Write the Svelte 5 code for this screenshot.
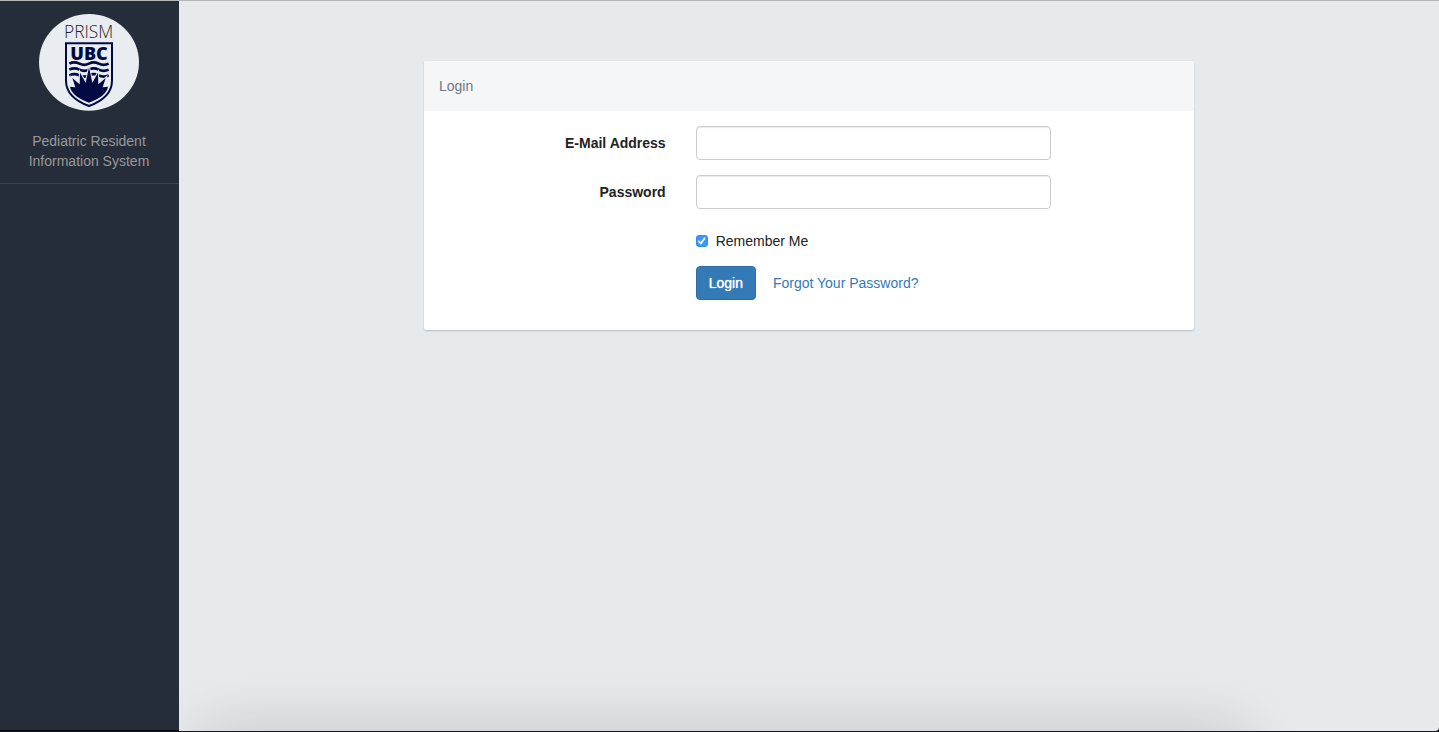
<script lang="ts">
  let email = $state('');
  let password = $state('');
  let remember = $state(true);

  function login(event: SubmitEvent) {
    event.preventDefault();
  }
</script>

<div class="page">
  <aside class="sidebar">
    <div class="brand">
      <svg class="logo" viewBox="0 0 300 291" role="img" aria-label="PRISM UBC">
        <ellipse cx="150" cy="145" rx="150" ry="145" fill="#e9edf2" />
        <text class="logo-prism" x="149" y="72" text-anchor="middle">PRISM</text>
        <path
          d="M81 88H219V200C219 240 187 262 150 276C113 262 81 240 81 200Z"
          fill="none"
          stroke="#020a44"
          stroke-width="6"
        />
        <text class="logo-ubc" x="150" y="138" text-anchor="middle">UBC</text>
        <g fill="none" stroke="#020a44" stroke-width="8">
          <path d="M91 149C101 144 111 144 121 149S141 154 150 149S169 144 179 149S199 154 209 149" />
          <path d="M91 167C101 162 111 162 121 167S141 172 150 167S169 162 179 167S199 172 209 167" />
          <path d="M91 184C101 179 111 179 121 184S141 189 150 184S169 179 179 184S199 189 209 184" />
        </g>
        <path
          d="M150 160L160 206L177 176L178 211L200 192L191 220L207 218C204 240 178 255 150 266C122 255 96 240 93 218L109 220L100 192L122 211L123 176L140 206Z"
          fill="#020a44"
          stroke="#e9edf2"
          stroke-width="6"
          paint-order="stroke"
        />
      </svg>
      <p>Pediatric Resident<br />Information System</p>
    </div>
  </aside>

  <main class="content">
    <section class="panel">
      <h1 class="panel-heading">Login</h1>
      <form class="panel-body" onsubmit={login}>
        <div class="form-row">
          <label class="control-label" for="email">E-Mail Address</label>
          <div class="field">
            <input id="email" class="form-control" type="email" bind:value={email} />
          </div>
        </div>
        <div class="form-row">
          <label class="control-label" for="password">Password</label>
          <div class="field">
            <input id="password" class="form-control" type="password" bind:value={password} />
          </div>
        </div>
        <div class="form-row">
          <div class="field offset">
            <label class="remember">
              <input type="checkbox" bind:checked={remember} />
              Remember Me
            </label>
          </div>
        </div>
        <div class="form-row">
          <div class="field offset actions">
            <button class="btn" type="submit">Login</button>
            <a class="forgot" href="/password/reset">Forgot Your Password?</a>
          </div>
        </div>
      </form>
    </section>
  </main>
</div>

<style>
  :global(body) {
    background: #14181d;
    color: #222;
    font-family: "Helvetica Neue", "Liberation Sans", Arial, sans-serif;
    font-size: 14px;
    line-height: 20px;
  }

  .page, .page * { box-sizing: border-box; }

  .page {
    display: flex;
    min-height: 100vh;
    border-top: 1px solid #b3b5b7;
    border-bottom: 1px solid #14181d;
  }

  .sidebar {
    flex: 0 0 179px;
    background: #262d3a;
    border-bottom: 1px solid #050608;
  }

  .brand {
    display: flex;
    flex-direction: column;
    align-items: center;
    padding: 13px 16px 12px 15px;
    border-bottom: 1px solid #3b424e;
    color: #999;
    text-align: center;
  }
  .brand p { margin: 20px 0 0; }

  .logo {
    display: block;
    width: 100px;
    height: 97px;
  }
  .logo-prism {
    font-family: "Open Sans", sans-serif;
    font-size: 52px;
    font-weight: 300;
    fill: #222;
  }
  .logo-ubc {
    font-family: "Open Sans", sans-serif;
    font-size: 54px;
    font-weight: 800;
    fill: #020a44;
  }

  .content {
    position: relative;
    flex: 1;
    padding: 60px 15px;
    overflow: hidden;
    background: #e6eaed;
    border-bottom-right-radius: 4px;
  }
  /* soft shade rising from the bottom edge */
  .content::after {
    content: "";
    position: absolute;
    right: 192px;
    bottom: -40px;
    left: 20px;
    height: 40px;
    box-shadow: 0 0 60px rgba(0, 0, 0, 0.18);
  }

  .panel {
    max-width: 770px;
    margin: 0 auto;
    background: #fff;
    border-radius: 2px;
    box-shadow: 0 1px 2px rgba(0, 0, 0, 0.2);
  }

  .panel-heading {
    margin: 0;
    padding: 15px;
    background: #f4f6f8;
    border-radius: 2px 2px 0 0;
    color: #717882;
    font-size: 14px;
    font-weight: normal;
  }

  .panel-body { padding: 15px 0; }

  .form-row {
    display: flex;
    margin-bottom: 15px;
  }

  .control-label {
    width: calc(100% / 3);
    padding: 7px 15px 0;
    font-weight: bold;
    text-align: right;
  }

  .field {
    width: 50%;
    padding: 0 15px;
  }
  .field.offset {
    width: calc(200% / 3);
    margin-left: calc(100% / 3);
  }

  .form-control {
    display: block;
    width: 100%;
    height: 34px;
    padding: 6px 12px;
    border: 1px solid #ccc;
    border-radius: 4px;
    background: #fff;
    box-shadow: inset 0 1px 1px rgba(0, 0, 0, 0.08);
    font: inherit;
  }
  .form-control:focus {
    border-color: #66afe9;
    outline: none;
  }

  .remember {
    display: flex;
    align-items: center;
    gap: 8px;
    padding-top: 7px;
    cursor: pointer;
  }
  .remember input {
    appearance: none;
    display: grid;
    place-items: center;
    width: 12px;
    height: 12px;
    margin: 0;
    border: 1px solid #aaa;
    border-radius: 3px;
    background: #fff;
  }
  .remember input:checked {
    border-color: #2f8df5;
    background: #3b99fc;
  }
  .remember input:checked::before {
    content: "";
    width: 8px;
    height: 8px;
    background: #fff;
    clip-path: polygon(0 56%, 16% 42%, 38% 66%, 82% 4%, 100% 16%, 42% 96%);
  }

  .actions {
    display: flex;
    align-items: center;
    gap: 17px;
  }

  .btn {
    height: 34px;
    padding: 6px 12px;
    border: 1px solid #2e6da4;
    border-radius: 4px;
    background: #337ab7;
    color: #fff;
    font: inherit;
    text-shadow: 0 0 1px #fff;
    cursor: pointer;
  }
  .btn:hover { background: #286090; }

  .forgot {
    color: #337ab7;
    text-decoration: none;
  }
  .forgot:hover { text-decoration: underline; }
</style>
